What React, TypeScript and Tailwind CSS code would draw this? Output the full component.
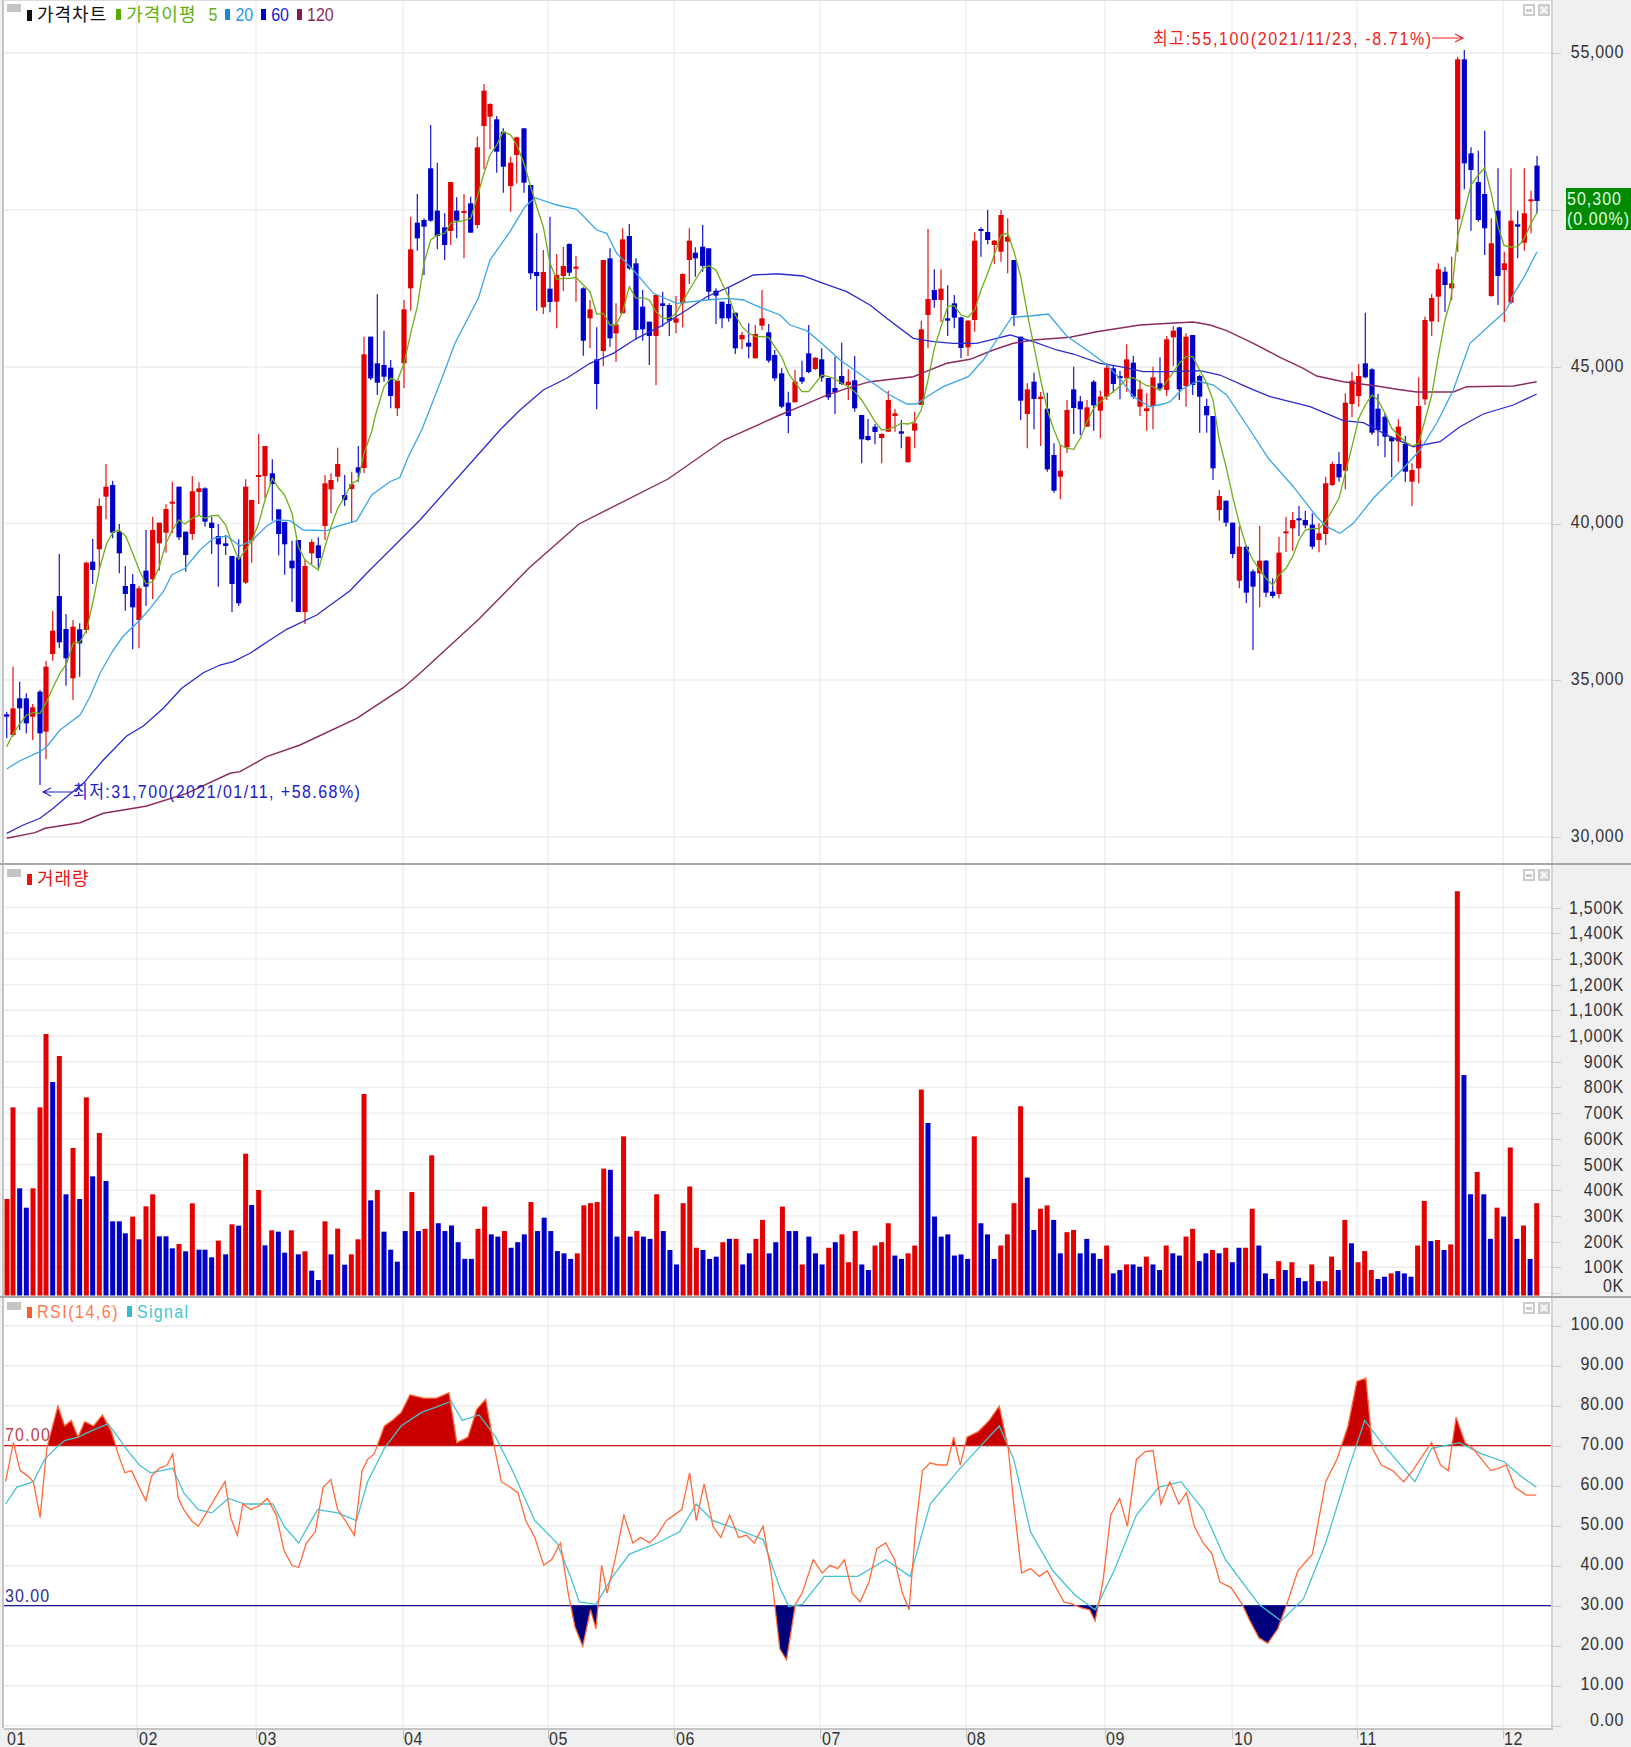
import React from "react";

type Pt = [number, number];
const k = 1631 / 1464; // the rough curves were read off a 1464px wide copy
const crop = (ox: number, oy: number, pts: number[][]): Pt[] => pts.map(([x, y]) => [ox + x / 3, oy + y / 3]);
const disp = (pts: number[][]): Pt[] => pts.map(([x, y]) => [x * k, y * k]);
const toPoints = (pts: Pt[]) => pts.map(([x, y]) => `${x.toFixed(1)},${y.toFixed(1)}`).join(" ");

// x, red?, wick top, body top, body bottom, wick bottom (in 3x crop units)
const candleCrops: [number, number, number[][]][] = [
  [0, 400, [[20,0,935,943,950,1015],[39,1,800,925,1005,1010],[59,0,845,895,925,990],[79,0,880,895,970,1000],[98,1,912,922,950,1020],[120,0,870,875,1000,1155],[138,1,782,800,995,1078],[158,1,633,692,762,782],[178,0,462,588,727,745],[198,0,642,687,775,857],[219,1,660,680,835,900],[239,0,670,688,730,830],[259,1,485,488,690,700],[278,0,417,485,510,552],[298,1,295,318,448,508],[318,1,192,260,290,358],[338,0,242,255,398,415],[358,0,372,395,460,520],[376,0,498,558,582,632],[398,0,522,552,622,748],[417,1,558,565,660,745],[438,0,390,512,560,618],[458,1,350,390,538,597],[478,1,368,368,430,512],[498,1,313,327,398,458],[517,1,245,305,308,400],[537,0,260,260,412,420],[557,0,395,395,465,515],[577,1,228,274,402,420],[597,1,247,265,276,345],[615,0,262,265,365,380],[635,0,350,368,384,462],[655,0,372,408,433,560],[677,0,405,430,438,465],[696,0,468,468,552,636],[716,0,418,472,610,618],[737,1,238,260,548,552],[755,1,300,300,422,488],[776,1,102,225,230,312],[795,1,138,138,228,295],[817,0,178,220,252,362],[836,0,328,328,402,466],[854,0,365,366,433,524],[876,0,422,482,505,606],[895,0,420,420,636,636],[915,1,478,498,636,672],[935,1,418,426,460,492],[955,0,412,436,474,505],[975,1,225,250,378,420],[993,1,220,240,268,340],[1013,1,143,192,230,245],[1034,0,225,285,300,318],[1055,1,215,253,267,368],[1075,0,138,202,218,245]]],
  [340, 70, [[72,1,800,853,1194,1209],[92,0,800,800,925,930],[112,0,673,880,938,975],[132,0,782,885,920,935],[152,0,870,893,978,1015],[172,1,930,932,1015,1038],[192,1,690,718,880,955],[212,1,440,538,655,722],[232,0,372,458,505,542],[252,0,445,450,470,615],[272,0,165,295,452,455],[292,0,278,422,498,538],[314,0,430,472,525,570],[332,1,336,336,483,525],[350,0,382,422,452,505],[372,1,372,423,428,565],[392,0,380,400,488,488],[412,1,200,232,465,475],[432,1,42,62,168,298],[450,1,100,102,140,238],[470,0,138,148,245,308],[490,0,175,185,290,368],[512,1,260,278,348,425],[530,1,200,202,255,340],[552,0,175,175,338,368],[572,0,345,345,610,628],[590,0,490,606,618,722],[610,1,540,606,712,732],[630,0,440,656,696,727],[650,1,552,615,695,775],[670,1,530,588,618,663],[688,0,520,522,608,618],[708,1,557,590,596,695],[730,0,652,655,812,857],[750,1,690,718,745,835],[770,0,772,868,942,1018],[790,1,570,570,843,888],[810,0,535,565,805,830],[828,1,700,763,790,875],[848,1,475,508,730,730],[868,0,462,498,595,600],[888,0,565,580,780,810],[908,0,660,710,778,812],[928,0,755,755,798,885],[948,1,675,675,798,945],[968,0,665,700,708,770],[988,0,700,705,752,798],[1008,1,678,745,758,790],[1028,1,610,612,700,772],[1048,1,475,512,570,642],[1066,0,532,548,565,620],[1088,0,465,530,588,605],[1106,0,535,535,665,690],[1128,0,655,662,677,762],[1146,0,695,695,745,775],[1166,0,652,702,745,755],[1186,0,728,728,835,852],[1206,1,785,795,808,838],[1226,0,760,818,830,865],[1246,1,765,792,865,865],[1266,1,660,745,767,780],[1286,0,762,787,872,878],[1304,0,840,855,925,932]]],
  [780, 200, [[5,0,505,520,620,625],[25,0,575,608,648,700],[45,1,510,545,607,607],[66,0,482,532,545,552],[86,0,375,460,516,520],[106,1,472,473,507,510],[125,0,445,478,533,545],[145,0,534,534,592,600],[165,0,470,564,577,642],[185,0,428,528,552,555],[205,1,508,545,555,600],[224,0,468,541,625,635],[245,0,645,645,718,790],[264,0,657,708,720,722],[285,0,672,680,696,733],[305,1,700,702,714,790],[325,1,572,600,695,695],[345,1,627,640,648,695],[364,0,660,694,701,745],[384,1,710,710,787,787],[404,1,635,670,692,745],[424,1,362,388,615,615],[444,1,87,297,345,445],[463,0,208,270,300,323],[483,1,208,266,300,366],[503,0,256,355,362,408],[523,0,285,310,353,385],[543,0,350,352,444,475],[564,1,360,362,442,468],[584,1,97,122,360,395],[603,0,82,87,92,170],[623,0,30,96,120,133],[643,1,120,122,135,192],[663,1,30,45,155,185],[683,1,55,110,125,220],[702,0,180,180,345,378],[722,0,410,410,602,660],[742,1,550,568,642,745],[762,0,518,545,597,688],[782,1,576,590,597,738],[802,0,578,626,808,815],[822,0,730,765,872,878],[841,1,735,812,830,898],[861,1,600,630,742,758],[881,0,500,568,624,702],[901,0,588,604,628,705],[921,1,600,622,680,680],[941,0,540,545,616,692],[961,1,572,590,632,715],[980,1,490,503,590,600],[1000,0,495,505,552,578],[1020,0,512,528,535,598],[1040,1,433,478,535,575],[1060,0,467,488,590,596],[1080,1,540,568,620,648],[1100,1,580,625,633,692],[1119,1,500,532,618,688],[1140,0,472,550,566,570],[1160,1,408,418,570,588],[1180,1,378,392,412,498]]],
  [1170, 300, [[28,0,80,82,268,300],[48,1,100,110,258,320],[68,0,105,105,255,285],[89,0,224,228,290,398],[110,0,296,318,346,398],[129,0,348,348,505,540],[148,1,570,588,630,662],[168,0,602,602,668,680],[188,0,668,668,762,775],[208,1,678,740,842,865],[229,0,735,740,878,910],[249,0,808,814,860,1050],[269,1,678,782,820,922],[288,0,780,782,878,892],[308,0,835,875,888,895],[327,1,710,758,882,895],[348,1,650,694,698,756],[368,1,636,660,685,752],[387,0,618,655,660,708],[406,0,632,660,676,685],[427,0,640,674,740,748],[447,1,670,700,720,757],[467,1,530,550,702,735],[487,1,485,492,555,558],[507,0,456,492,532,545],[526,1,280,308,512,568],[546,1,215,242,312,352],[566,1,192,228,288,320],[586,0,38,190,232,235],[606,0,205,208,398,405],[624,0,282,326,390,438],[645,0,340,350,410,472],[665,0,408,412,424,532],[685,1,358,380,424,486],[706,0,408,432,515,545],[726,1,490,510,545,618],[746,1,232,318,505,550],[765,1,50,60,298,315],[785,1,-18,-6,64,108]]],
  [1331, 0, [[322,1,790,808,890,966],[342,0,800,815,855,936],[362,1,770,850,865,900],[380,1,170,178,658,755],[400,0,150,178,490,568],[420,0,442,460,510,692],[442,0,452,546,660,665],[461,0,392,582,685,765],[481,1,655,730,888,890],[501,0,505,632,828,915],[520,1,755,790,810,966],[540,1,505,662,908,912],[560,0,632,673,680,775],[580,1,505,640,728,752],[600,1,572,598,603,700],[618,0,468,497,603,640]]],
];
const candles = candleCrops.flatMap(([ox, oy, list]) =>
  list.map(([x, red, wt, bt, bb, wb]) => ({ x: ox + x / 3, red: !!red, wt: oy + wt / 3, bt: oy + bt / 3, bb: oy + bb / 3, wb: oy + wb / 3 }))
);

const ma5: Pt[] = [
  ...crop(0, 400, [[20,1040],[40,1000],[60,970],[80,945],[100,938],[120,940],[140,905],[160,860],[180,820],[200,790],[220,730],[240,725],[260,690],[280,600],[300,500],[320,430],[340,395],[358,390],[378,410],[398,460],[418,510],[438,552],[458,545],[478,500],[498,430],[517,390],[537,360],[555,372],[577,355],[597,346],[615,355],[635,347],[655,346],[677,375],[696,430],[716,478],[737,450],[755,422],[776,370],[795,300],[817,235],[836,265],[854,285],[876,340],[895,440],[915,480],[935,495],[955,510],[975,440],[993,380],[1013,325],[1034,290],[1055,250],[1075,240],[1092,160],[1115,95]]),
  ...crop(340, 70, [[105,1040],[132,950],[152,925],[172,933],[192,880],[212,790],[232,710],[252,580],[272,510],[292,495],[314,490],[332,460],[350,455],[372,452],[392,445],[412,380],[432,310],[450,255],[470,225],[490,185],[512,195],[530,225],[552,280],[572,350],[590,410],[610,470],[630,580],[650,628],[670,625],[690,625],[708,622],[730,645],[750,665],[770,733],[790,730],[810,765],[828,765],[848,725],[868,650],[888,685],[908,683],[928,690],[948,725],[968,745],[988,745],[1008,730],[1028,695],[1048,660],[1066,630],[1088,595],[1106,587],[1128,600],[1146,640],[1166,680],[1186,735],[1206,770],[1226,790],[1246,800],[1266,800],[1286,802],[1304,830]]),
  ...crop(780, 200, [[5,470],[25,520],[45,548],[66,575],[86,575],[106,550],[125,525],[145,530],[165,537],[185,550],[205,560],[224,575],[245,600],[264,630],[285,665],[305,690],[325,688],[345,680],[364,670],[384,672],[404,665],[424,630],[444,540],[463,445],[483,380],[503,320],[523,317],[543,345],[564,352],[584,330],[603,270],[623,220],[643,165],[663,105],[683,100],[702,155],[722,230],[742,340],[762,440],[782,540],[802,630],[822,690],[841,735],[861,745],[881,748],[901,715],[921,665],[941,625],[961,605],[980,590],[1000,575],[1020,558],[1040,535],[1060,533],[1080,545],[1100,557],[1119,560],[1140,572],[1160,545]]),
  ...crop(1170, 300, [[28,190],[48,170],[68,170],[89,210],[110,250],[129,300],[148,420],[168,500],[188,590],[208,670],[229,740],[249,780],[269,810],[288,835],[308,855],[327,825],[348,805],[368,770],[387,720],[406,690],[427,686],[447,686],[467,665],[487,630],[507,595],[526,520],[546,440],[566,355],[586,315],[606,285],[624,300],[645,340],[665,385],[685,405],[706,425],[726,438],[746,430],[765,360],[785,285],[805,170],[825,60],[842,0]]),
  ...crop(1331, 0, [[380,710],[400,635],[420,555],[442,525],[461,503],[481,580],[501,680],[520,737],[540,741],[560,740],[580,715],[600,670],[618,638]]),
];
const ma20: Pt[] = [
  ...crop(0, 400, [[20,1107],[60,1082],[120,1055],[140,1040],[180,990],[240,945],[270,890],[300,820],[340,750],[370,708],[420,660],[450,625],[490,575],[515,525],[555,505],[600,450],[640,415],[680,408],[720,438],[755,422],[800,378],[830,360],[870,362],[910,390],[980,392],[1010,380],[1070,362],[1115,285],[1170,245],[1200,232],[1225,170]]),
  ...crop(340, 70, [[245,1080],[300,940],[345,820],[415,685],[450,570],[510,485],[555,410],[585,383],[650,405],[710,418],[770,480],[800,490],[830,550],[880,600],[940,670],[1010,700],[1100,690],[1165,685],[1210,690],[1260,712]]),
  ...crop(780, 200, [[0,345],[30,375],[80,392],[125,430],[180,480],[230,515],[280,550],[330,585],[380,612],[410,612],[440,590],[490,560],[565,530],[610,480],[650,420],[695,352],[750,348],[805,342],[860,408],[920,450],[975,490],[1020,535],[1060,590],[1110,620],[1150,612]]),
  ...crop(1170, 300, [[0,305],[40,265],[85,243],[130,255],[170,285],[240,390],[295,475],[370,560],[440,650],[470,680],[510,700],[550,670],[610,595],[700,505],[750,450],[800,370],[850,270],[900,130],[960,75],[1005,35],[1025,0]]),
  ...crop(1331, 0, [[540,895],[580,830],[618,755]]),
];
const ma60: Pt[] = [
  ...crop(0, 640, [[20,580],[70,555],[120,535],[160,505],[200,470],[250,430],[310,360],[380,288],[430,258],[490,205],[545,145],[610,98],[660,75],[700,65],[750,40],[810,0]]),
  ...crop(0, 400, [[860,688],[950,645],[1050,572],[1100,520],[1180,440],[1260,360]]),
  ...crop(340, 70, [[480,1080],[540,1020],[610,960],[680,925],[750,880],[820,850],[890,805],[960,770],[1040,720],[1100,680],[1170,650],[1240,615],[1300,612]]),
  ...crop(780, 200, [[0,222],[70,228],[130,250],[200,275],[270,315],[320,355],[400,415],[460,425],[520,430],[590,430],[650,415],[690,405],[760,425],[830,450],[880,462],[960,490],[1020,500],[1090,515]]),
  ...crop(1170, 300, [[0,215],[90,212],[150,225],[240,265],[300,290],[420,320],[520,362],[580,368],[660,410],[730,440],[810,425],[870,380],[940,342],[1030,315],[1100,282]]),
];
const ma120: Pt[] = [
  ...crop(0, 640, [[20,595],[105,578],[135,565],[240,548],[310,520],[410,503],[440,498],[560,460],[690,400],[720,395],[800,350],[900,315],[1070,235],[1210,143],[1260,100]]),
  [479, 619], [529, 568], [579, 524], [668, 479], [724, 440],
  ...crop(780, 200, [[0,645],[60,620],[130,590],[200,565],[270,545],[400,530],[430,518],[500,490],[570,478],[640,450],[700,430],[760,420],[870,412],[950,395],[1080,375]]),
  ...crop(1170, 300, [[0,70],[70,66],[120,75],[170,92],[250,130],[330,172],[400,205],[440,228],[520,245],[620,258],[680,268],[740,276],[850,276],[890,260],[1030,258],[1100,245]]),
];

// volume: x, red?, top
const volHead = [[21,1,297],[39,1,22],[59,0,265],[79,0,323],[99,1,265],[120,1,22],[138,1,-198],[158,0,-54],[178,1,-132],[198,0,283],[219,1,144],[239,0,297],[259,1,-8],[278,0,229],[298,1,99],[318,0,243],[338,0,364],[358,0,364],[376,0,400],[398,1,350],[417,0,418],[438,1,319],[458,1,283],[478,0,409],[498,0,409],[517,0,445],[537,1,432],[557,0,454],[577,1,310],[597,0,449],[615,0,449],[635,0,472],[655,1,422],[677,0,463],[696,1,373],[716,0,377],[737,1,161],[755,0,315],[776,1,270],[795,0,436],[815,1,391],[835,0,395],[854,0,458],[874,1,391],[895,0,463],[915,1,454],[935,0,512],[955,0,540],[975,1,364],[993,0,463],[1013,1,386],[1034,0,494],[1054,1,463],[1074,1,418],[1092,1,-18],[1112,0,301],[1132,1,270],[1152,0,395],[1172,0,449],[1192,0,485]];
// positive top = red bar, negative = blue
const volTail: number[][] = [[362,-1105],[368,1070],[374,-1105],[380,1103],[386,1037],[392,-1098],[398,-1105],[404,-1100],[410,-1115],[416,-1130],[422,-1130],[428,1103],[435,1083],[441,-1108],[447,-1110],[453,1105],[459,-1120],[465,-1115],[471,-1108],[476,1079],[482,-1105],[490,-1093],[495,-1105],[500,-1123],[507,-1125],[513,-1130],[518,1125],[523,1082],[529,1080],[535,1079],[541,1049],[547,-1050],[553,-1110],[559,1020],[565,-1110],[571,1105],[577,-1110],[583,-1112],[589,1072],[595,-1105],[601,-1122],[607,-1135],[613,1080],[619,1065],[625,1120],[631,-1122],[637,-1130],[643,-1128],[649,1115],[655,-1112],[661,1112],[667,-1135],[672,-1125],[678,1112],[684,1095],[690,-1125],[695,-1115],[701,1083],[707,-1105],[713,-1105],[719,1135],[725,-1110],[731,-1125],[737,-1135],[743,1120],[749,-1115],[755,1108],[761,1133],[767,1105],[773,-1135],[779,-1140],[785,1118],[791,1115],[797,1098],[803,-1127],[809,-1130],[815,1125],[821,1118],[827,978],[833,-1008],[839,-1092],[845,-1110],[851,-1108],[857,-1127],[863,-1126],[869,-1130],[875,1020],[881,-1098],[887,-1108],[893,-1130],[899,1118],[905,1108],[909,1080],[915,993],[921,-1057],[927,-1104],[933,1085],[939,1082],[945,-1095],[951,-1125],[957,1106],[963,1104],[969,-1125],[975,-1112],[981,-1125],[987,-1130],[993,1118],[999,-1143],[1005,-1140],[1011,1135],[1017,-1135],[1023,-1137],[1029,1128],[1035,-1135],[1041,-1140],[1047,1118],[1053,-1125],[1059,-1127],[1065,1110],[1071,1103],[1077,-1132],[1083,-1125],[1089,1122],[1095,-1125],[1101,1120],[1107,-1133],[1113,-1120],[1119,1120],[1125,1085],[1131,-1118],[1137,-1143],[1143,-1148],[1149,1132],[1155,-1140],[1161,1133],[1167,-1147],[1173,-1150],[1179,1135],[1185,-1150],[1191,1128],[1197,-1140],[1203,-1143],[1207,1095],[1213,-1116],[1219,1133],[1225,1123],[1231,1140],[1237,-1148],[1243,-1146],[1249,1143],[1255,-1141],[1261,-1143],[1267,-1146],[1273,1118],[1278,1078],[1284,-1114],[1290,1113],[1296,-1122],[1302,1117],[1308,800],[1314,-965],[1320,-1072],[1326,1052],[1332,-1072],[1338,-1112],[1344,1084],[1350,-1092],[1356,1030],[1362,-1112],[1368,1100],[1374,-1130],[1380,1080]];

const volBars: { x: number; top: number; red: boolean }[] = volHead.map(([x, red, top]) => ({ x: x / 3, top: 1100 + top / 3, red: !!red }));
const volSlots: Record<number, number> = {};
volTail.forEach(([dx, t]) => { volSlots[Math.round((dx * k - 6.7) / 6.617)] = t; });
for (let i = 60; i < 232; i++) {
  const t = volSlots[i] ?? -(volSlots[i - 1] ?? 1120);
  volSlots[i] = t;
  volBars.push({ x: 8.2 + 6.617 * i, top: Math.abs(t) * k, red: t > 0 });
}

const rsi = disp([[5,1330],[12,1295],[18,1320],[25,1325],[30,1330],[36,1362],[42,1300],[46,1285],[52,1262],[58,1280],[64,1275],[70,1290],[76,1276],[84,1280],[92,1270],[100,1285],[106,1305],[112,1322],[118,1320],[125,1335],[131,1347],[136,1325],[143,1318],[150,1315],[155,1305],[160,1345],[165,1355],[172,1365],[178,1370],[184,1360],[190,1350],[197,1338],[202,1330],[207,1362],[213,1378],[218,1350],[225,1355],[232,1352],[240,1345],[248,1360],[255,1392],[262,1405],[268,1407],[275,1385],[283,1375],[290,1335],[297,1328],[303,1355],[310,1365],[318,1378],[325,1320],[330,1310],[336,1305],[345,1280],[352,1275],[360,1268],[368,1252],[380,1255],[392,1255],[403,1250],[410,1295],[420,1290],[428,1265],[436,1256],[442,1290],[450,1330],[458,1335],[465,1340],[472,1365],[480,1380],[488,1405],[495,1400],[503,1385],[510,1430],[516,1460],[523,1478],[530,1445],[535,1462],[540,1405],[545,1430],[552,1400],[560,1360],[568,1385],[575,1380],[583,1385],[590,1378],[598,1365],[605,1360],[612,1355],[619,1322],[625,1365],[632,1332],[640,1370],[647,1380],[655,1360],[663,1380],[670,1378],[677,1385],[685,1370],[692,1410],[700,1480],[706,1490],[714,1440],[720,1430],[730,1400],[738,1412],[745,1405],[752,1408],[758,1400],[765,1430],[772,1438],[780,1420],[787,1390],[795,1385],[803,1400],[810,1430],[816,1445],[822,1370],[828,1320],[835,1313],[842,1315],[850,1315],[856,1290],[862,1315],[868,1290],[878,1285],[888,1275],[897,1262],[905,1300],[910,1350],[917,1412],[925,1408],[933,1415],[940,1410],[948,1425],[955,1438],[963,1440],[970,1443],[978,1445],[983,1455],[990,1420],[997,1360],[1005,1345],[1012,1370],[1020,1310],[1028,1303],[1035,1302],[1042,1350],[1050,1330],[1058,1350],[1065,1340],[1072,1370],[1080,1385],[1088,1395],[1095,1420],[1105,1425],[1115,1440],[1122,1455],[1130,1470],[1138,1475],[1147,1462],[1155,1440],[1165,1410],[1178,1395],[1190,1330],[1200,1310],[1210,1280],[1218,1240],[1226,1237],[1232,1300],[1240,1315],[1250,1320],[1260,1330],[1268,1320],[1278,1305],[1285,1295],[1293,1315],[1300,1320],[1307,1272],[1315,1295],[1322,1300],[1330,1310],[1338,1320],[1345,1318],[1352,1315],[1360,1335],[1370,1342],[1379,1342]]);
const signal = disp([[5,1350],[15,1335],[30,1330],[40,1310],[50,1300],[58,1293],[70,1290],[85,1283],[97,1278],[106,1290],[113,1300],[125,1315],[135,1322],[155,1318],[165,1340],[178,1355],[190,1358],[205,1345],[220,1350],[245,1350],[255,1370],[268,1385],[285,1355],[303,1358],[320,1365],[330,1330],[345,1300],[360,1280],[378,1268],[405,1258],[415,1275],[430,1270],[445,1290],[460,1320],[480,1365],[500,1385],[512,1415],[520,1438],[535,1440],[550,1415],[565,1395],[590,1385],[610,1375],[625,1350],[640,1365],[660,1372],[685,1382],[700,1425],[708,1442],[720,1440],[740,1415],[770,1415],[795,1400],[817,1415],[835,1350],[860,1320],[880,1298],[897,1280],[910,1310],[925,1375],[945,1410],[965,1432],[983,1445],[1000,1410],[1020,1360],[1040,1335],[1060,1330],[1080,1355],[1100,1400],[1115,1420],[1130,1440],[1150,1455],[1170,1435],[1190,1385],[1210,1320],[1225,1275],[1240,1295],[1270,1330],[1285,1300],[1310,1295],[1330,1305],[1350,1312],[1365,1325],[1379,1335]]);

const monthX = [137, 256, 403, 548, 674, 820, 966, 1105, 1232, 1357, 1503];
const months = [["01", 7], ["02", 139], ["03", 258], ["04", 404], ["05", 549], ["06", 676], ["07", 822], ["08", 967], ["09", 1106], ["10", 1234], ["11", 1359], ["12", 1504]] as [string, number][];

// the 50,000 tick has no label: the current price box sits on it
const priceTicks: [string, number][] = [["55,000", 53], ["", 210], ["45,000", 367], ["40,000", 523.5], ["35,000", 680], ["30,000", 837]];
const volTicks: [string, number][] = ["1,500K", "1,400K", "1,300K", "1,200K", "1,100K", "1,000K", "900K", "800K", "700K", "600K", "500K", "400K", "300K", "200K", "100K", "0K"].map((t, i) => [t, 907.5 + 25.7 * i]);
const rsiTicks: [string, number][] = ["100.00", "90.00", "80.00", "70.00", "60.00", "50.00", "40.00", "30.00", "20.00", "10.00", "0.00"].map((t, i) => [t, 1325.7 + 40 * i]);

const RED = "#e20000";
const NAVY = "#0000c8";
const font = "font-['Liberation_Sans','Noto_Sans_CJK_KR',sans-serif]";
const digit = "scale-y-[1.2] tracking-[0.7px] text-[16px] leading-none text-[#333]";
const legendDigit = "scale-y-[1.2]";
const hangul = "text-[18px] tracking-[1px]";

function PanelButtons() {
  return (
    <div className="absolute top-[4px] right-[1px] flex gap-[3px]">
      <div className="w-[12px] h-[12px] bg-[#ccc] p-[2px]">
        <div className="w-full h-full bg-white flex items-center justify-center">
          <div className="w-[6px] h-[3px] bg-[#ccc]" />
        </div>
      </div>
      <div className="w-[12px] h-[12px] bg-[#ccc] p-[2px]">
        <svg viewBox="0 0 8 8" className="w-full h-full bg-[#ddd]">
          <path d="M1 1L7 7M7 1L1 7" stroke="#fff" strokeWidth="1.4" />
        </svg>
      </div>
    </div>
  );
}

function Marker({ color }: { color: string }) {
  return <span className="inline-block w-[5px] h-[11px] shrink-0" style={{ backgroundColor: color }} />;
}

function Grid({ hs, top, h }: { hs: number[]; top: number; h: number }) {
  return (
    <g stroke="#eeeeee" strokeWidth="1.4">
      {hs.map((y) => <line key={y} x1="4" x2="1551" y1={y} y2={y} />)}
      {monthX.map((x) => <line key={x} x1={x} x2={x} y1={top} y2={top + h} />)}
    </g>
  );
}

function Axis({ ticks, h, top, dy = 0, nudge = 0, children }: { ticks: [string, number][]; h: number; top: number; dy?: number; nudge?: number; children?: React.ReactNode }) {
  return (
    <div className={`relative flex-1 bg-[#f0f0f0] ${font}`} style={{ height: h }}>
      {ticks.map(([label, y], i) => (
        <div key={y}>
          <div className="absolute left-0 w-[8px] h-[1px] bg-[#cccccc]" style={{ top: y - top }} />
          {label && (
            <div
              className={`absolute right-[7px] ${digit}`}
              style={{ top: y - top - 8 + dy + (i === ticks.length - 1 ? nudge : 0) }}
            >
              {label}
            </div>
          )}
        </div>
      ))}
      {children}
    </div>
  );
}

function Plot({ top, h, children, labels }: { top: number; h: number; children: React.ReactNode; labels: React.ReactNode }) {
  return (
    <div className={`relative ml-[2px] w-[1551px] border-x-2 border-l-[#c4c4c4] border-r-[#d4d4d4] bg-white ${font}`} style={{ height: h }}>
      <svg width="1547" height={h} viewBox={`4 ${top} 1547 ${h}`} className="block">
        {children}
      </svg>
      {labels}
      <div className="absolute top-[4px] left-[3px] w-[14px] h-[8px] bg-[#c4c4c4]" />
      <PanelButtons />
    </div>
  );
}

function PriceChart() {
  return (
    <Plot
      top={0}
      h={863}
      labels={
        <>
          <div className="absolute top-0 inset-x-0 h-[1px] bg-[#dddddd]" />
          <div className="absolute top-[5px] left-[23px] flex items-center h-[20px] text-[16px] leading-none">
            <Marker color="#111" />
            <span className={`ml-[5px] text-[#111] ${hangul}`}>가격차트</span>
            <span className="ml-[9px]"><Marker color="#5aa800" /></span>
            <span className={`ml-[5px] text-[#63b012] ${hangul}`}>가격이평</span>
            <span className={`ml-[12px] text-[#63b012] ${legendDigit}`}>5</span>
            <span className="ml-[8px]"><Marker color="#1488dc" /></span>
            <span className={`ml-[5px] text-[#2a96e4] ${legendDigit}`}>20</span>
            <span className="ml-[8px]"><Marker color="#0000cc" /></span>
            <span className={`ml-[5px] text-[#1a1ad0] ${legendDigit}`}>60</span>
            <span className="ml-[8px]"><Marker color="#7e1e54" /></span>
            <span className={`ml-[5px] text-[#8b2a5f] ${legendDigit}`}>120</span>
          </div>
          <div className="absolute top-[30px] left-[1149px] scale-y-[1.15] whitespace-pre text-[16px] leading-[18px] tracking-[1.65px] text-[#ee2222]">최고:55,100(2021/11/23, -8.71%)</div>
          <div className="absolute top-[783px] left-[69px] scale-y-[1.15] whitespace-pre text-[16px] leading-[18px] tracking-[1.45px] text-[#2020c8]">최저:31,700(2021/01/11, +58.68%)</div>
        </>
      }
    >
      <Grid hs={priceTicks.map((t) => t[1])} top={0} h={863} />
      {candles.map((c, i) => {
        const color = c.red ? RED : NAVY;
        return (
          <g key={i}>
            <line x1={c.x} x2={c.x} y1={c.wt} y2={c.wb} stroke={color} strokeWidth="1.3" opacity="0.85" />
            <rect x={c.x - 2.6} y={c.bt} width="5.2" height={Math.max(c.bb - c.bt, 2)} fill={color} />
          </g>
        );
      })}
      <polyline points={toPoints(ma120)} fill="none" stroke="#8b2a5f" strokeWidth="1.4" />
      <polyline points={toPoints(ma60)} fill="none" stroke="#2a2ad0" strokeWidth="1.3" />
      <polyline points={toPoints(ma20)} fill="none" stroke="#3aa6e8" strokeWidth="1.3" />
      <polyline points={toPoints(ma5)} fill="none" stroke="#6fae18" strokeWidth="1.3" />
      <path d="M1432 38H1463M1455 34L1463 38L1455 42" fill="none" stroke="#ee2222" strokeWidth="1.1" />
      <path d="M43 792H73M51 788L43 792L51 796" fill="none" stroke="#2020c8" strokeWidth="1.1" />
    </Plot>
  );
}

function VolumeChart() {
  return (
    <Plot top={865} h={431} labels={<div className={`absolute top-[4px] left-[23px] flex items-center h-[20px] gap-[5px] leading-none text-[#ee1111] ${hangul}`}><Marker color="#ee1111" />거래량</div>}>
      <Grid hs={volTicks.map((t) => t[1])} top={865} h={431} />
      {volBars.map((b, i) => (
        <rect key={i} x={b.x - 2.5} y={b.top} width="5" height={1295.5 - b.top} fill={b.red ? RED : NAVY} />
      ))}
    </Plot>
  );
}

function RsiChart() {
  const y70 = 1445.7;
  const y30 = 1605.7;
  const first = rsi[0][0];
  const last = rsi[rsi.length - 1][0];
  return (
    <Plot
      top={1298}
      h={430}
      labels={
        <>
          <div className="absolute top-[4px] left-[23px] flex items-center h-[20px] text-[16px] leading-none">
            <Marker color="#ff5a2a" />
            <span className={`ml-[5px] tracking-[1.5px] text-[#ff7a50] ${legendDigit}`}>RSI(14,6)</span>
            <span className="ml-[8px]"><Marker color="#38bccb" /></span>
            <span className={`ml-[5px] tracking-[1.3px] text-[#48c4d2] ${legendDigit}`}>Signal</span>
          </div>
          <div className="absolute top-[129px] left-[1px] scale-y-[1.15] text-[16px] leading-none tracking-[1.2px] text-[#c04050]">70.00</div>
          <div className="absolute top-[290px] left-[1px] scale-y-[1.15] text-[16px] leading-none tracking-[1px] text-[#2a2a9c]">30.00</div>
        </>
      }
    >
      <defs>
        <clipPath id="above70"><rect x="0" y="1298" width="1560" height={y70 - 1298} /></clipPath>
        <clipPath id="below30"><rect x="0" y={y30} width="1560" height="130" /></clipPath>
      </defs>
      <Grid hs={rsiTicks.map((t) => t[1])} top={1298} h={430} />
      <polygon points={toPoints([...rsi, [last, y70], [first, y70]])} fill="#c80000" clipPath="url(#above70)" />
      <polygon points={toPoints([...rsi, [last, y30], [first, y30]])} fill="#00007c" clipPath="url(#below30)" />
      <line x1="4" x2="1551" y1={y70} y2={y70} stroke="#cc1818" strokeWidth="1.3" />
      <line x1="4" x2="1551" y1={y30} y2={y30} stroke="#18188c" strokeWidth="1.3" />
      <polyline points={toPoints(signal)} fill="none" stroke="#45c2d0" strokeWidth="1.3" />
      <polyline points={toPoints(rsi)} fill="none" stroke="#ff6a3a" strokeWidth="1.3" />
    </Plot>
  );
}

export default function App() {
  return (
    <div className={`w-[1631px] h-[1747px] bg-[#f0f0f0] ${font}`}>
      <div className="flex">
        <PriceChart />
        <Axis ticks={priceTicks} h={863} top={0} dy={-1.5}>
          <div className="absolute left-[13px] top-[188px] w-[65px] h-[42px] bg-[#008a00] text-[16px] leading-[20px] tracking-[1px] text-[#e4ffe4] pl-[1px] pt-[1px] whitespace-pre">
            <div className="scale-y-[1.15] origin-left">50,300</div>
            <div className="scale-y-[1.15] origin-left">(0.00%)</div>
          </div>
        </Axis>
      </div>
      <div className="h-[2px] bg-[#a8a8a8]" />
      <div className="flex">
        <VolumeChart />
        <Axis ticks={volTicks} h={431} top={865} nudge={-7} />
      </div>
      <div className="h-[2px] bg-[#a8a8a8]" />
      <div className="flex">
        <RsiChart />
        <Axis ticks={rsiTicks} h={430} top={1298} dy={-2} nudge={-4} />
      </div>
      <div className="ml-[4px] w-[1549px] h-[2px] bg-[#c4c4c4]" />
      <div className="relative h-[17px]">
        {monthX.map((x) => (
          <div key={x} className="absolute top-0 w-[1px] h-[9px] bg-[#c4c4c4]" style={{ left: x }} />
        ))}
        {months.map(([m, x]) => (
          <div key={m} className="absolute top-[2px] h-[14px] scale-y-[1.15] text-[16px] leading-[14px] tracking-[0.7px] text-[#333]" style={{ left: x }}>{m}</div>
        ))}
      </div>
    </div>
  );
}
